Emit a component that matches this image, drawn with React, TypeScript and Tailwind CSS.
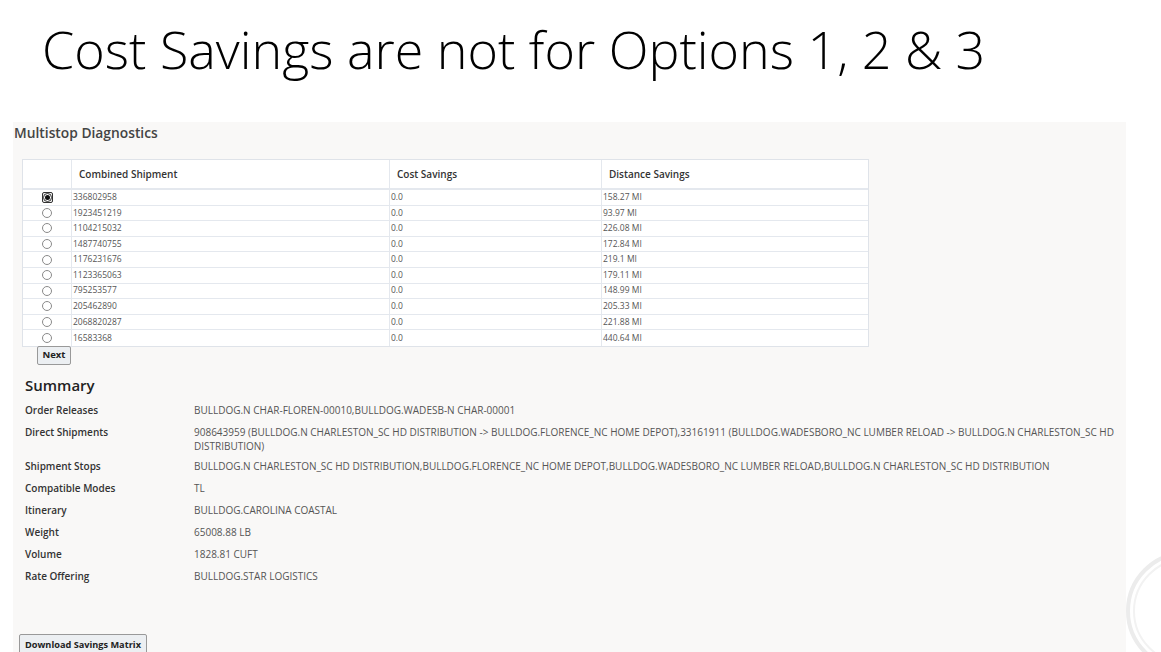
import React from 'react';

const rows = [
  { id: '336802958', cost: '0.0', dist: '158.27 MI', selected: true },
  { id: '1923451219', cost: '0.0', dist: '93.97 MI' },
  { id: '1104215032', cost: '0.0', dist: '226.08 MI' },
  { id: '1487740755', cost: '0.0', dist: '172.84 MI' },
  { id: '1176231676', cost: '0.0', dist: '219.1 MI' },
  { id: '1123365063', cost: '0.0', dist: '179.11 MI' },
  { id: '795253577', cost: '0.0', dist: '148.99 MI' },
  { id: '205462890', cost: '0.0', dist: '205.33 MI' },
  { id: '2068820287', cost: '0.0', dist: '221.88 MI' },
  { id: '16583368', cost: '0.0', dist: '440.64 MI' },
];

const summary = [
  ['Order Releases', 'BULLDOG.N CHAR-FLOREN-00010,BULLDOG.WADESB-N CHAR-00001'],
  [
    'Direct Shipments',
    '908643959 (BULLDOG.N CHARLESTON_SC HD DISTRIBUTION -> BULLDOG.FLORENCE_NC HOME DEPOT),33161911 (BULLDOG.WADESBORO_NC LUMBER RELOAD -> BULLDOG.N CHARLESTON_SC HD DISTRIBUTION)',
  ],
  [
    'Shipment Stops',
    'BULLDOG.N CHARLESTON_SC HD DISTRIBUTION,BULLDOG.FLORENCE_NC HOME DEPOT,BULLDOG.WADESBORO_NC LUMBER RELOAD,BULLDOG.N CHARLESTON_SC HD DISTRIBUTION',
  ],
  ['Compatible Modes', 'TL'],
  ['Itinerary', 'BULLDOG.CAROLINA COASTAL'],
  ['Weight', '65008.88 LB'],
  ['Volume', '1828.81 CUFT'],
  ['Rate Offering', 'BULLDOG.STAR LOGISTICS'],
];

const Radio = ({ checked }: { checked?: boolean }) =>
  checked ? (
    <span className="flex h-[11px] w-[11px] items-center justify-center rounded-[2px] border border-[#333] bg-[#eee]">
      <span className="flex h-[9px] w-[9px] items-center justify-center rounded-full border border-[#333] bg-white">
        <span className="h-[5px] w-[5px] rounded-full bg-[#111]" />
      </span>
    </span>
  ) : (
    <span className="h-[10px] w-[10px] rounded-full border border-[#8a8a8a] bg-white" />
  );

export default function App() {
  return (
    <div className="relative h-[652px] w-[1161px] overflow-hidden bg-white">
      <h1 className="pl-[42px] pt-[17px] text-[52px] font-light leading-[64px] text-black [font-family:'Open_Sans',sans-serif]">
        Cost Savings are not for Options 1, 2 &amp; 3
      </h1>

      <div className="ml-[13px] mt-[41px] h-[540px] w-[1113px] bg-[#f9f8f7] [font-family:'Open_Sans',sans-serif]">
        <div className="pl-[1px] pt-[2px] text-[13.8px] font-semibold leading-[18px] text-[#444]">Multistop Diagnostics</div>

        <div className="ml-[9px] mt-[17px] w-[847px] border border-[#dfe3e9] bg-white">
          <div className="flex h-[30px] border-b-2 border-[#e4e8ee] text-[10px] font-semibold text-[#333]">
            <div className="w-[49px] border-r border-[#e4e8ee]" />
            <div className="flex w-[318px] items-center border-r border-[#e4e8ee] pl-[7px]">Combined Shipment</div>
            <div className="flex w-[212px] items-center border-r border-[#e4e8ee] pl-[7px]">Cost Savings</div>
            <div className="flex flex-1 items-center pl-[7px]">Distance Savings</div>
          </div>
          {rows.map((r, i) => (
            <div
              key={r.id}
              className={`flex h-[15.6px] text-[8.5px] text-[#555] ${i < rows.length - 1 ? 'border-b border-[#e4e8ee]' : ''}`}
            >
              <div className="flex w-[49px] items-center justify-center border-r border-[#e4e8ee]">
                <Radio checked={r.selected} />
              </div>
              <div className="flex w-[318px] items-center border-r border-[#e4e8ee] pl-[1px]">{r.id}</div>
              <div className="flex w-[212px] items-center border-r border-[#e4e8ee] pl-[1px]">{r.cost}</div>
              <div className="flex flex-1 items-center pl-[1px]">{r.dist}</div>
            </div>
          ))}
        </div>

        <button className="ml-[24px] -mt-[1px] block h-[19px] w-[34px] rounded-[2px] border border-[#999] bg-[#eceff2] text-[9.5px] font-bold text-[#222]">
          Next
        </button>

        <div className="pl-[12px] pt-[10px] text-[15px] font-semibold leading-[20px] text-[#222]">Summary</div>

        <div className="pl-[12px] pt-[8px] text-[10px] leading-[14px]">
          {summary.map(([k, v], i) => (
            <div key={k} className={`flex ${i === 1 ? 'pb-[6px]' : 'pb-[8px]'}`}>
              <div className="w-[169px] shrink-0 font-semibold text-[#333]">{k}</div>
              <div className="w-[931px] text-[#555]">{v}</div>
            </div>
          ))}
        </div>

        <button className="ml-[6px] mt-[43px] block h-[22px] rounded-[2px] border border-[#999] bg-[#eceff2] px-[5px] text-[9.2px] font-bold text-[#222]">
          Download Savings Matrix
        </button>
      </div>

      <svg className="absolute left-[1120px] top-[545px]" width="41" height="107" viewBox="0 0 41 107">
        <circle cx="66" cy="66" r="58" fill="none" stroke="#ececec" strokeWidth="4" />
        <circle cx="66" cy="66" r="52" fill="none" stroke="#f2f2f2" strokeWidth="2" />
      </svg>
    </div>
  );
}
